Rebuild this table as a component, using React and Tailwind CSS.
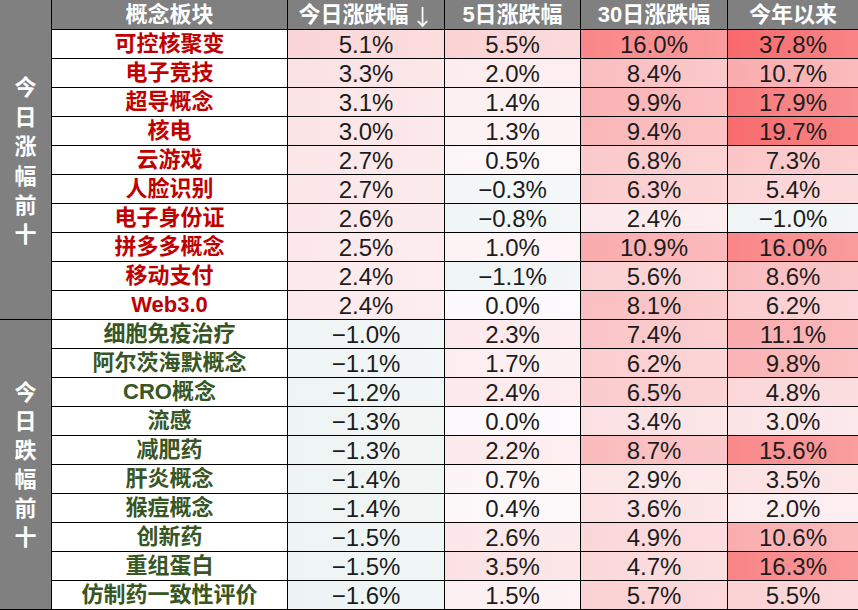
// Concept-sector performance table: top 10 gainers / losers of the day,
// cells tinted by value like an Excel colour scale.

const up = [
  ["可控核聚变", 5.1, 5.5, 16.0, 37.8],
  ["电子竞技", 3.3, 2.0, 8.4, 10.7],
  ["超导概念", 3.1, 1.4, 9.9, 17.9],
  ["核电", 3.0, 1.3, 9.4, 19.7],
  ["云游戏", 2.7, 0.5, 6.8, 7.3],
  ["人脸识别", 2.7, -0.3, 6.3, 5.4],
  ["电子身份证", 2.6, -0.8, 2.4, -1.0],
  ["拼多多概念", 2.5, 1.0, 10.9, 16.0],
  ["移动支付", 2.4, -1.1, 5.6, 8.6],
  ["Web3.0", 2.4, 0.0, 8.1, 6.2],
];

const down = [
  ["细胞免疫治疗", -1.0, 2.3, 7.4, 11.1],
  ["阿尔茨海默概念", -1.1, 1.7, 6.2, 9.8],
  ["CRO概念", -1.2, 2.4, 6.5, 4.8],
  ["流感", -1.3, 0.0, 3.4, 3.0],
  ["减肥药", -1.3, 2.2, 8.7, 15.6],
  ["肝炎概念", -1.4, 0.7, 2.9, 3.5],
  ["猴痘概念", -1.4, 0.4, 3.6, 2.0],
  ["创新药", -1.5, 2.6, 4.9, 10.6],
  ["重组蛋白", -1.5, 3.5, 4.7, 16.3],
  ["仿制药一致性评价", -1.6, 1.5, 5.7, 5.5],
];

const headers = ["概念板块", "今日涨跌幅", "5日涨跌幅", "30日涨跌幅", "今年以来"];

function mix(a, b, t) {
  return a.map((x, i) => Math.round(x + (b[i] - x) * t));
}

const WHITE = [252, 250, 252];
const RED = [248, 105, 107];
const PALE = [236, 243, 242];

function cellBg(v) {
  let c;
  if (v < 0) {
    c = mix(WHITE, PALE, Math.min(1, 0.55 + Math.abs(v) * 0.25));
  } else {
    c = mix(WHITE, RED, Math.min(1, v / 20));
  }
  const light = mix(c, [255, 255, 255], 0.18);
  return `linear-gradient(to right, rgb(${c.join(",")}), rgb(${light.join(",")}))`;
}

function fmt(v) {
  const s = Math.abs(v).toFixed(1) + "%";
  return v < 0 ? "−" + s : s;
}

function Rows({ rows, color }) {
  return rows.map((r) => (
    <>
      <div
        key={r[0]}
        className={`flex items-center justify-center bg-white font-bold text-[22px] leading-none ${color}`}
      >
        {r[0]}
      </div>
      {r.slice(1).map((v, i) => (
        <div
          key={r[0] + i}
          className="flex items-center justify-center pt-px text-[24px] leading-none text-[#1c1c1c]"
          style={{ background: cellBg(v) }}
        >
          {fmt(v)}
        </div>
      ))}
    </>
  ));
}

export default function App() {
  return (
    <div
      className="w-[858px] h-[610px] bg-white"
      style={{ fontFamily: '"Liberation Sans", "Noto Sans CJK SC", sans-serif' }}
    >
      <div className="grid grid-cols-[51px_235px_156px_135px_146px_130px] grid-rows-[29px_repeat(20,28px)] gap-px bg-black pb-px">
        <div className="col-start-1 row-start-1 row-span-11 flex items-center justify-center bg-[#808080]">
          <div className="w-[22px] text-center text-white font-bold text-[22px] leading-[29.4px] pt-[4px]">
            今日涨幅前十
          </div>
        </div>
        <div className="col-start-1 row-start-12 row-span-10 flex items-center justify-center bg-[#808080]">
          <div className="w-[22px] text-center text-white font-bold text-[22px] leading-[29px]">
            今日跌幅前十
          </div>
        </div>
        {headers.map((h, i) => (
          <div
            key={h}
            className="flex items-center justify-center bg-[#808080] text-white font-bold text-[22px] leading-none"
          >
            {h}
            {i === 1 && (
              <span className="ml-[3px] font-normal" style={{ fontFamily: '"Noto Sans CJK SC", sans-serif' }}>
                ↓
              </span>
            )}
          </div>
        ))}
        <Rows rows={up} color="text-[#c00000]" />
        <Rows rows={down} color="text-[#375623]" />
      </div>
    </div>
  );
}
